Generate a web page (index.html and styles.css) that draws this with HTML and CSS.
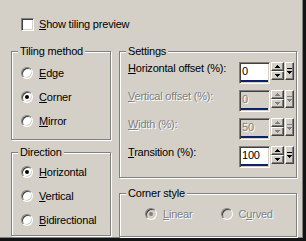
FILE: index.html
```html
<!DOCTYPE html>
<html lang="en">
<head>
    <meta charset="UTF-8">
    <title>Tiling</title>
    <link rel="stylesheet" href="styles.css">
</head>
<body>
    <div class="dialog">
        <div class="check-row">
            <span class="checkbox"></span>
            <span><u>S</u>how tiling preview</span>
        </div>

        <div class="cols">
            <div class="col col-left">
                <div class="group tiling">
                    <span class="cap">Tiling method</span>
                    <div class="opt"><span class="radio"></span><span><u>E</u>dge</span></div>
                    <div class="opt"><span class="radio on"></span><span><u>C</u>orner</span></div>
                    <div class="opt"><span class="radio"></span><span><u>M</u>irror</span></div>
                </div>
                <div class="group direction">
                    <span class="cap">Direction</span>
                    <div class="opt"><span class="radio on"></span><span><u>H</u>orizontal</span></div>
                    <div class="opt"><span class="radio"></span><span><u>V</u>ertical</span></div>
                    <div class="opt"><span class="radio"></span><span><u>B</u>idirectional</span></div>
                </div>
            </div>

            <div class="col col-right">
                <div class="group settings">
                    <span class="cap">Settings</span>
                    <div class="row">
                        <span class="lbl"><u>H</u>orizontal offset (%):</span>
                        <div class="spin">
                            <div class="edit"><span class="val">0</span><span class="bar"></span></div>
                            <div class="arrows">
                                <span class="btn"><svg width="5" height="3"><rect x="2" y="0" width="1" height="1"/><rect x="1" y="1" width="3" height="1"/><rect x="0" y="2" width="5" height="1"/></svg></span>
                                <span class="btn"><svg width="5" height="3"><rect x="0" y="0" width="5" height="1"/><rect x="1" y="1" width="3" height="1"/><rect x="2" y="2" width="1" height="1"/></svg></span>
                            </div>
                            <span class="btn pop"><svg width="5" height="6"><rect x="0" y="0" width="5" height="1"/><rect x="0" y="3" width="5" height="1"/><rect x="1" y="4" width="3" height="1"/><rect x="2" y="5" width="1" height="1"/></svg></span>
                        </div>
                    </div>
                    <div class="row off">
                        <span class="lbl"><u>V</u>ertical offset (%):</span>
                        <div class="spin">
                            <div class="edit"><span class="val">0</span><span class="bar"></span></div>
                            <div class="arrows">
                                <span class="btn"><svg width="5" height="3"><rect x="2" y="0" width="1" height="1"/><rect x="1" y="1" width="3" height="1"/><rect x="0" y="2" width="5" height="1"/></svg></span>
                                <span class="btn"><svg width="5" height="3"><rect x="0" y="0" width="5" height="1"/><rect x="1" y="1" width="3" height="1"/><rect x="2" y="2" width="1" height="1"/></svg></span>
                            </div>
                            <span class="btn pop"><svg width="5" height="6"><rect x="0" y="0" width="5" height="1"/><rect x="0" y="3" width="5" height="1"/><rect x="1" y="4" width="3" height="1"/><rect x="2" y="5" width="1" height="1"/></svg></span>
                        </div>
                    </div>
                    <div class="row off">
                        <span class="lbl"><u>W</u>idth (%):</span>
                        <div class="spin">
                            <div class="edit"><span class="val">50</span><span class="bar"></span></div>
                            <div class="arrows">
                                <span class="btn"><svg width="5" height="3"><rect x="2" y="0" width="1" height="1"/><rect x="1" y="1" width="3" height="1"/><rect x="0" y="2" width="5" height="1"/></svg></span>
                                <span class="btn"><svg width="5" height="3"><rect x="0" y="0" width="5" height="1"/><rect x="1" y="1" width="3" height="1"/><rect x="2" y="2" width="1" height="1"/></svg></span>
                            </div>
                            <span class="btn pop"><svg width="5" height="6"><rect x="0" y="0" width="5" height="1"/><rect x="0" y="3" width="5" height="1"/><rect x="1" y="4" width="3" height="1"/><rect x="2" y="5" width="1" height="1"/></svg></span>
                        </div>
                    </div>
                    <div class="row">
                        <span class="lbl"><u>T</u>ransition (%):</span>
                        <div class="spin">
                            <div class="edit"><span class="val">100</span><span class="bar"></span></div>
                            <div class="arrows">
                                <span class="btn"><svg width="5" height="3"><rect x="2" y="0" width="1" height="1"/><rect x="1" y="1" width="3" height="1"/><rect x="0" y="2" width="5" height="1"/></svg></span>
                                <span class="btn"><svg width="5" height="3"><rect x="0" y="0" width="5" height="1"/><rect x="1" y="1" width="3" height="1"/><rect x="2" y="2" width="1" height="1"/></svg></span>
                            </div>
                            <span class="btn pop"><svg width="5" height="6"><rect x="0" y="0" width="5" height="1"/><rect x="0" y="3" width="5" height="1"/><rect x="1" y="4" width="3" height="1"/><rect x="2" y="5" width="1" height="1"/></svg></span>
                        </div>
                    </div>
                </div>

                <div class="group corner off">
                    <span class="cap">Corner style</span>
                    <div class="opt"><span class="radio on"></span><span><u>L</u>inear</span></div>
                    <div class="opt"><span class="radio"></span><span>C<u>u</u>rved</span></div>
                </div>
            </div>
        </div>
    </div>
</body>
</html>
```

FILE: styles.css
```css
html, body {
    margin: 0;
    padding: 0;
    background: #d4d0c8;
}

.dialog {
    width: 306px;
    height: 241px;
    box-sizing: border-box;
    padding-top: 17px;
    background: #d4d0c8;
    border-right: 3px solid #141414;
    border-bottom: 3px solid #141414;
    box-shadow: inset -1px -1px 0 #808080;
    font-family: "Liberation Sans", Arial, sans-serif;
    font-size: 11px;
    line-height: 13px;
    letter-spacing: -0.2px;
    color: #000;
    overflow: hidden;
}

u {
    text-underline-offset: 1px;
}

/* checkbox row */
.check-row {
    display: flex;
    align-items: center;
    height: 14px;
    padding-left: 21px;
}

.checkbox {
    width: 13px;
    height: 13px;
    box-sizing: border-box;
    margin-right: 5px;
    background: #fff;
    border: 1px solid;
    border-color: #808080 #fff #fff #808080;
    box-shadow: inset 1px 1px 0 #404040, inset -1px -1px 0 #d4d0c8;
}

/* columns */
.cols {
    display: flex;
    gap: 8px;
    margin-top: 20px;
    padding-left: 11px;
}

.col {
    display: flex;
    flex-direction: column;
}

.col-left { width: 100px; gap: 12px; }
.col-right { width: 178px; gap: 15px; }

/* etched group box */
.group {
    position: relative;
    box-sizing: border-box;
    border: 1px solid #808080;
    box-shadow: 1px 1px 0 #fff, inset 1px 1px 0 #fff;
}

.cap {
    position: absolute;
    top: -7px;
    left: 6px;
    padding: 0 2px 0 2px;
    background: #d4d0c8;
}

.tiling { height: 89px; padding: 9px 0 0 9px; }
.direction { height: 84px; padding: 7px 0 0 9px; }
.settings { height: 127px; padding: 10px 0 0 8px; }
.corner { height: 44px; padding: 8px 0 0 25px; display: flex; }

/* radio options */
.opt {
    display: flex;
    align-items: center;
    height: 24px;
}

.corner .opt { width: 81px; }

.radio {
    position: relative;
    width: 12px;
    height: 12px;
    box-sizing: border-box;
    margin-right: 6px;
    border-radius: 50%;
    background: #fff;
    border: 1px solid;
    border-color: #808080 #fff #fff #808080;
    box-shadow: inset 1px 1px 0 #404040, inset -1px -1px 0 #d4d0c8;
}

.radio.on::after {
    content: "";
    position: absolute;
    left: 3px;
    top: 3px;
    width: 4px;
    height: 4px;
    border-radius: 50%;
    background: #000;
}

/* settings rows */
.row {
    display: flex;
    height: 22px;
    margin-bottom: 6px;
}

.lbl {
    width: 111px;
}

.spin {
    display: flex;
    gap: 1px;
}

.edit {
    width: 31px;
    height: 22px;
    box-sizing: border-box;
    display: flex;
    flex-direction: column;
    justify-content: space-between;
    padding: 2px 1px 0 2px;
    background: #fff;
    border: 1px solid;
    border-color: #808080 #fff #fff #808080;
    box-shadow: inset 1px 1px 0 #404040, inset -1px -1px 0 #d4d0c8;
}

.bar {
    height: 2px;
    margin: 0 0 1px -1px;
    background: #0a246a;
}

.arrows {
    display: flex;
    flex-direction: column;
}

.btn {
    display: flex;
    align-items: center;
    justify-content: center;
    width: 13px;
    height: 9px;
    box-sizing: border-box;
    background: #d4d0c8;
    border: 1px solid;
    border-color: #fff #404040 #404040 #fff;
    box-shadow: inset -1px -1px 0 #808080;
}

.btn svg { fill: #000; }

.pop {
    width: 9px;
    height: 18px;
}

/* disabled look */
.off .lbl,
.off .val,
.corner.off .opt span:last-child {
    color: #808080;
    text-shadow: 1px 1px 0 #fff;
}

.off .edit { background: #d4d0c8; }
.off .btn svg { fill: #808080; }
.off .radio { background: #d4d0c8; }
.off .radio.on::after { background: #808080; }
```
